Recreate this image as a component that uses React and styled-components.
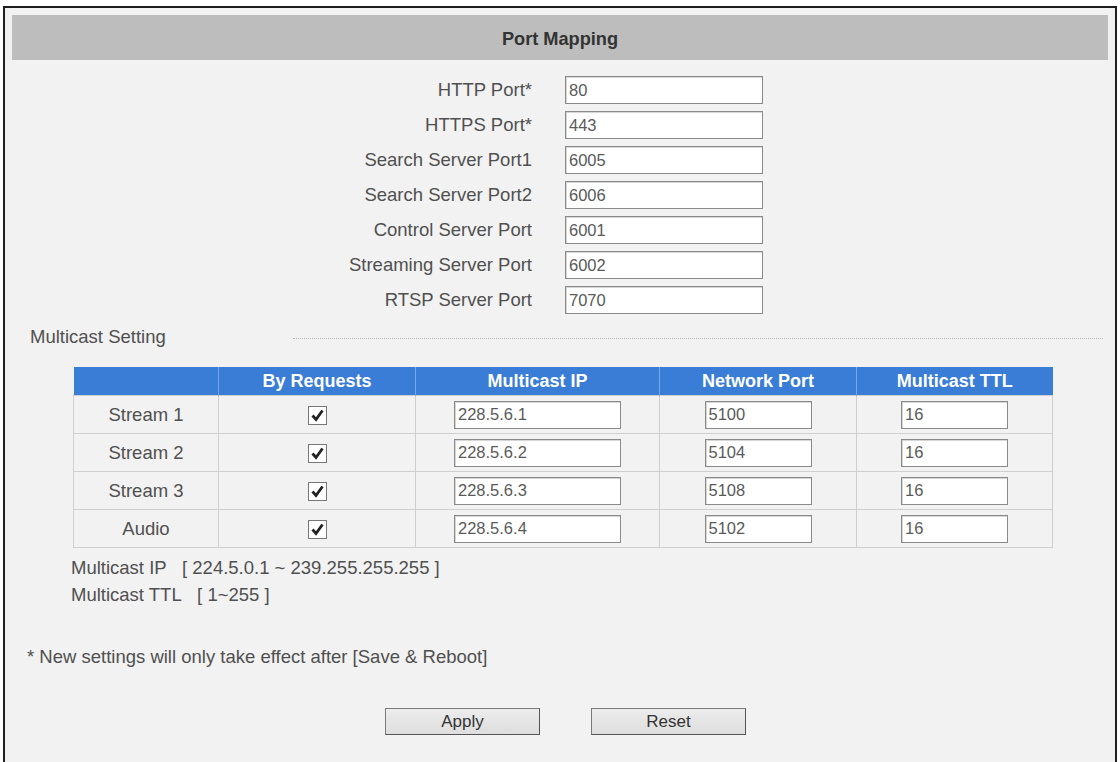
import React from "react";
import styled, { createGlobalStyle } from "styled-components";

const GlobalStyle = createGlobalStyle`
  html, body {
    margin: 0;
    padding: 0;
    background: #ffffff;
    font-family: "Liberation Sans", Arial, sans-serif;
  }
`;

const ports = [
  { label: "HTTP Port*", value: "80" },
  { label: "HTTPS Port*", value: "443" },
  { label: "Search Server Port1", value: "6005" },
  { label: "Search Server Port2", value: "6006" },
  { label: "Control Server Port", value: "6001" },
  { label: "Streaming Server Port", value: "6002" },
  { label: "RTSP Server Port", value: "7070" },
];

const streams = [
  { name: "Stream 1", ip: "228.5.6.1", port: "5100", ttl: "16" },
  { name: "Stream 2", ip: "228.5.6.2", port: "5104", ttl: "16" },
  { name: "Stream 3", ip: "228.5.6.3", port: "5108", ttl: "16" },
  { name: "Audio", ip: "228.5.6.4", port: "5102", ttl: "16" },
];

const CheckMark = () => (
  <CheckBox>
    <svg width="15" height="15" viewBox="0 0 15 15">
      <path d="M2.5 7.5 L6 11.5 L12.5 2.5" fill="none" stroke="#222" strokeWidth="2.8" strokeLinejoin="miter" />
    </svg>
  </CheckBox>
);

const App = () => {
  return (
    <>
      <GlobalStyle />
      <Frame>
        <TitleBar>Port Mapping</TitleBar>

        <PortGrid>
          {ports.map(port => (
            <React.Fragment key={port.label}>
              <PortLabel>{port.label}</PortLabel>
              <TextInput width={198} defaultValue={port.value} />
            </React.Fragment>
          ))}
        </PortGrid>

        <SectionRow>
          <SectionTitle>Multicast Setting</SectionTitle>
          <DottedRule />
        </SectionRow>

        <StreamTable>
          <colgroup>
            <col style={{ width: 145 }} />
            <col style={{ width: 197 }} />
            <col style={{ width: 244 }} />
            <col style={{ width: 197 }} />
            <col style={{ width: 196 }} />
          </colgroup>
          <thead>
            <tr>
              <HeadCell />
              <HeadCell>By Requests</HeadCell>
              <HeadCell>Multicast IP</HeadCell>
              <HeadCell>Network Port</HeadCell>
              <HeadCell>Multicast TTL</HeadCell>
            </tr>
          </thead>
          <tbody>
            {streams.map(stream => (
              <tr key={stream.name}>
                <Cell>{stream.name}</Cell>
                <Cell><CheckMark /></Cell>
                <Cell><TextInput width={167} defaultValue={stream.ip} /></Cell>
                <Cell><TextInput width={107} defaultValue={stream.port} /></Cell>
                <Cell><TextInput width={107} defaultValue={stream.ttl} /></Cell>
              </tr>
            ))}
          </tbody>
        </StreamTable>

        <Notes>
          <div>Multicast IP&nbsp;&nbsp;&nbsp;[ 224.5.0.1 ~ 239.255.255.255 ]</div>
          <div>Multicast TTL&nbsp;&nbsp;&nbsp;[ 1~255 ]</div>
        </Notes>

        <Notice>* New settings will only take effect after [Save &amp; Reboot]</Notice>

        <ButtonRow>
          <FormButton>Apply</FormButton>
          <FormButton>Reset</FormButton>
        </ButtonRow>
      </Frame>
    </>
  );
}

export default App;

const Frame = styled.div`
  box-sizing: border-box;
  margin: 6px 0 0 3px;
  width: 1114px;
  min-height: 756px;
  padding: 7px 7px 0;
  border: 2px solid #1e1e1e;
  border-bottom: none;
  background: #f2f2f2;
  color: #505050;
  font-size: 18.5px;
`;

const TitleBar = styled.div`
  box-sizing: border-box;
  height: 45px;
  padding-top: 4px;
  display: flex;
  align-items: center;
  justify-content: center;
  background: #bdbdbd;
  color: #333;
  font-weight: bold;
  font-size: 18.2px;
`;

const PortGrid = styled.div`
  display: grid;
  grid-template-columns: 520px 198px;
  column-gap: 33px;
  row-gap: 7px;
  margin-top: 16px;
  align-items: center;
`;

const PortLabel = styled.div`
  text-align: right;
`;

const TextInput = styled.input`
  box-sizing: border-box;
  width: ${p => p.width}px;
  height: 28px;
  margin: 0;
  padding: 0 3px;
  border: 1px solid #8a8a8a;
  box-shadow: inset 1px 1px 0 #d6d6d6;
  background: #fff;
  color: #5a5a5a;
  font-family: "Liberation Sans", Arial, sans-serif;
  font-size: 16.5px;
  outline: none;
`;

const SectionRow = styled.div`
  display: flex;
  align-items: center;
  margin-top: 12px;
  padding-left: 18px;
`;

const SectionTitle = styled.div`
  line-height: 21px;
`;

const DottedRule = styled.div`
  flex: 1;
  margin: 3px 5px 0 127px;
  border-top: 1px dotted #b5b5b5;
`;

const StreamTable = styled.table`
  margin: 20px 0 0 61px;
  width: 979px;
  border-collapse: collapse;
  table-layout: fixed;
`;

const HeadCell = styled.th`
  height: 28px;
  padding: 0;
  background: #3a7dd6;
  color: #fff;
  font-weight: bold;
  font-size: 18px;
  text-align: center;
  border-left: 1px solid #7aa6e6;

  &:first-child {
    border-left: none;
  }
`;

const Cell = styled.td`
  height: 37px;
  padding: 0;
  text-align: center;
  vertical-align: middle;
  border: 1px solid #cfcfcf;
  font-size: 18.5px;

  input {
    vertical-align: middle;
  }
`;

const CheckBox = styled.span`
  box-sizing: border-box;
  display: inline-flex;
  align-items: center;
  justify-content: center;
  width: 19px;
  height: 19px;
  border: 1px solid #777;
  background: #fff;
  vertical-align: middle;
`;

const Notes = styled.div`
  margin-top: 6px;
  padding-left: 59px;
  line-height: 27px;
`;

const Notice = styled.div`
  margin-top: 35px;
  padding-left: 15px;
  line-height: 27px;
`;

const ButtonRow = styled.div`
  display: flex;
  justify-content: center;
  gap: 51px;
  margin-top: 38px;
  padding-left: 11px;
`;

const FormButton = styled.button`
  box-sizing: border-box;
  width: 155px;
  height: 27px;
  padding: 0;
  border: 1px solid #7a7a7a;
  border-bottom-color: #555;
  border-right-color: #555;
  background: linear-gradient(#ececec, #dedede);
  color: #333;
  font-family: "Liberation Sans", Arial, sans-serif;
  font-size: 17px;
`;
